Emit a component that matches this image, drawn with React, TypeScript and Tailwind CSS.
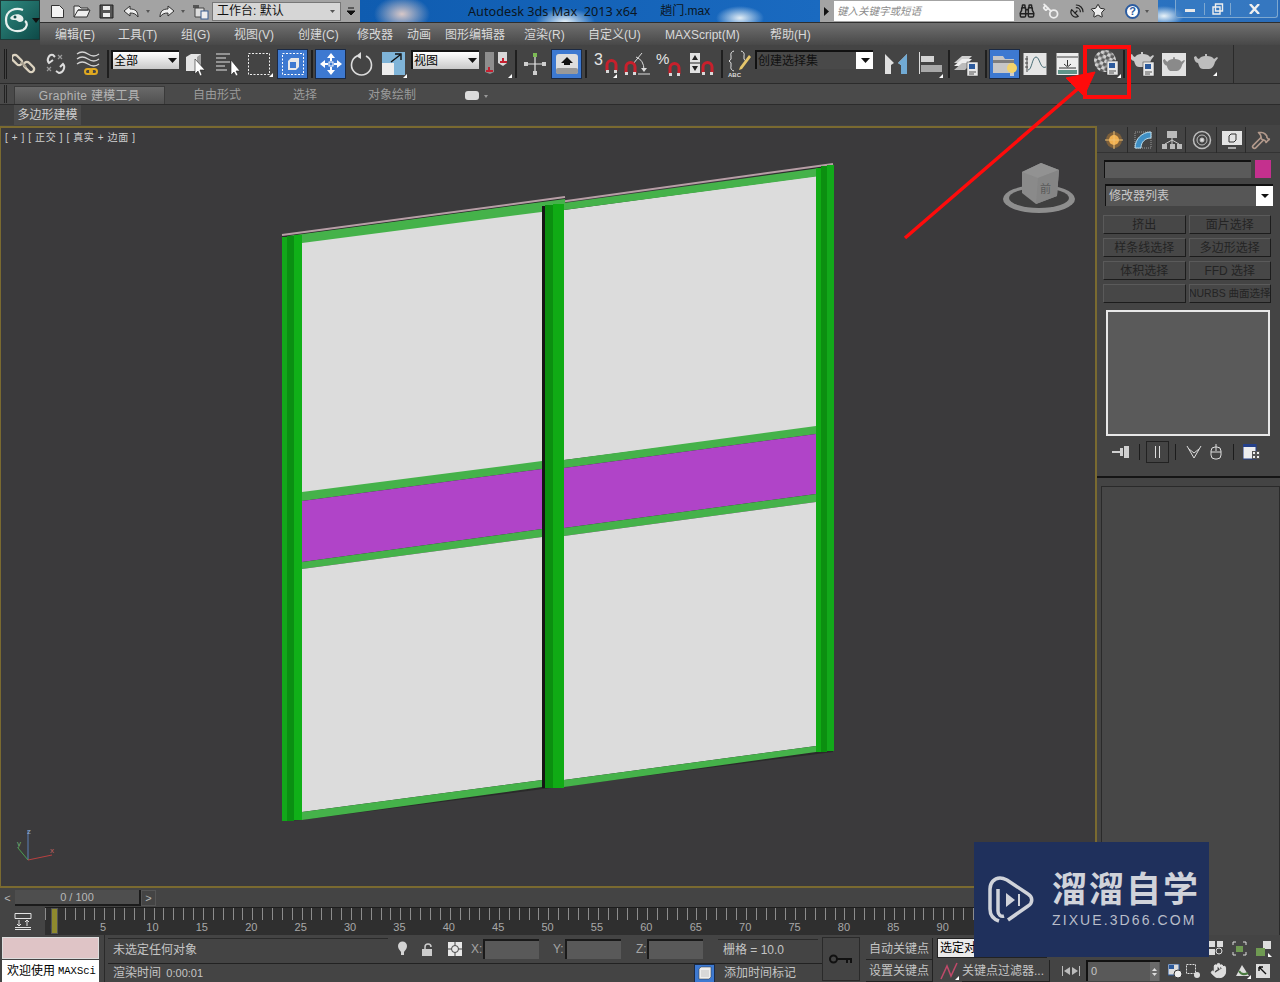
import {Binoculars, Hand, Hammer, Key, SatelliteDish, Star} from "lucide-react";

const Flyout = ({x, y}: {x: number; y: number}) => (
    <path d={`M${x} ${y}l4 -4v4z`} fill="#fff"/>
)

const Magnet = ({x, y}: {x: number; y: number}) => (
    <g>
        <path d={`M${x + 1} ${y + 11}v-6a4.5 4.5 0 0 1 9 0v6`} fill="none" stroke="#c8202c" strokeWidth="3"/>
        <path d={`M${x} ${y + 10}h3v3h-3zM${x + 8} ${y + 10}h3v3h-3z`} fill="#d8d8d8"/>
    </g>
)

const DocBadge = ({x, y}: {x: number; y: number}) => (
    <g>
        <rect x={x} y={y} width="11" height="14" fill="#e8e8e8" stroke="#333" strokeWidth=".5"/>
        <rect x={x + 2} y={y + 2} width="6" height="5" fill="#2c5a9c"/>
        <path d={`M${x + 2} ${y + 10}h7M${x + 2} ${y + 12}h5`} stroke="#555"/>
    </g>
)

const Teapot = ({x, y, fill = "#c9c9c9"}: {x: number; y: number; fill?: string}) => (
    <path
        transform={`translate(${x} ${y})`}
        fill={fill}
        d="M11 0h2v2c3 0 6 1 7 3l3-2 1 1-3 4c-1 4-3 7-6 7H9C6 15 5 12 4 9 2 9 0 6 0 3l2-1c1 2 2 3 3 3 1-2 4-3 6-3z"
    />
)

const Sep = ({ml}: {ml: string}) => <div className={`${ml} h-[28px] w-[2px] bg-[#1f1f1f] shrink-0`}/>

const Grip = () => (
    <div className="ml-[4px] flex gap-[1px] shrink-0">
        <div className="h-[30px] w-[1px] bg-[#1d1d1d]"/>
        <div className="h-[30px] w-[1px] bg-[#1d1d1d]"/>
    </div>
)

const MainToolbar = () => (
    <div className="flex h-[38px] w-[1234px] items-center border-r border-[#2a2a2a] text-black">
        <Grip/>
        <svg className="ml-[5px] shrink-0" width="24" height="24" viewBox="0 0 24 24" fill="none" stroke="#dcd3c0" strokeWidth="2.4">
            <rect x="-1" y="5" width="12" height="6" rx="3" transform="rotate(45 5 8)"/>
            <rect x="11" y="12" width="12" height="6" rx="3" transform="rotate(45 17 15)"/>
            <path d="M9 10l5 5" stroke="#a8a090"/>
        </svg>
        <svg className="ml-[8px] shrink-0" width="24" height="24" viewBox="0 0 24 24" fill="none" stroke="#dcdcdc" strokeWidth="2">
            <path d="M9 8 5 11C2 8 5 2 9 3l2 2"/>
            <path d="M16 15l3-3c3 3 0 9-4 9l-3-2"/>
            <path d="M14 3l4 4M18 3l-4 4M3 15l4 4M7 15l-4 4" stroke="#9a9a9a" strokeWidth="1.2"/>
        </svg>
        <svg className="ml-[8px] shrink-0" width="25" height="26" viewBox="0 0 25 26" fill="none" stroke="#d4d4d4" strokeWidth="1.3">
            <path d="M1 3q5-4 11 0t11 0M1 8q5-4 11 0t11 0M1 13q5-4 11 0t11 0"/>
            <rect x="9" y="18" width="7" height="5" rx="2.5" stroke="#e0a920" strokeWidth="2"/>
            <rect x="14" y="18" width="7" height="5" rx="2.5" stroke="#e0a920" strokeWidth="2"/>
        </svg>
        <Sep ml="ml-[6px]"/>
        <div className="ml-[2px] mt-[5px] flex h-[19px] w-[68px] shrink-0 items-center justify-between self-start border-t-2 border-l-2 border-[#151515] bg-[linear-gradient(#fff,#c9c9c9)] pl-[1px] pr-[2px] text-[12px] leading-none">
            全部
            <svg width="9" height="5" viewBox="0 0 9 5"><path d="M0 0h9L4.500 5z" fill="#111"/></svg>
        </div>
        <svg className="ml-[6px] shrink-0" width="22" height="26" viewBox="0 0 22 26">
            <path d="M1 6l5-3h10v14l-4 3H1z" fill="#e4e4e4"/>
            <path d="M12 6l4-3v14l-4 3z" fill="#9c9c9c"/>
            <path d="M10 8v15l3-3 2 5 2-1-2-5h5z" fill="#fff" stroke="#222" strokeWidth=".6"/>
        </svg>
        <svg className="ml-[8px] shrink-0" width="26" height="26" viewBox="0 0 26 26">
            <path d="M1 3h14M1 7h10M1 11h14M1 15h9M1 19h11" stroke="#e2e2e2"/>
            <path d="M16 9v15l3-3 2 4 2-1-2-4h4z" fill="#fff" stroke="#222" strokeWidth=".6"/>
        </svg>
        <svg className="ml-[6px] shrink-0" width="26" height="26" viewBox="0 0 26 26">
            <rect x="1.500" y="2.500" width="21" height="21" fill="none" stroke="#eee" strokeDasharray="2 1.500"/>
            <Flyout x={22} y={26}/>
        </svg>
        <div className="ml-[4px] flex h-[30px] w-[31px] shrink-0 items-center justify-center border border-[#1b2a44] bg-[#3d79d1]">
            <svg width="24" height="24" viewBox="0 0 24 24">
                <rect x="1.500" y="1.500" width="21" height="21" fill="none" stroke="#fff" strokeDasharray="2 1.500"/>
                <path d="M7 9l3-3h8v9l-3 3H7z" fill="#e8e8e8"/>
                <path d="M9 10h6v6H9z" fill="#3d79d1"/>
            </svg>
        </div>
        <Sep ml="ml-[3px]"/>
        <div className="ml-[2px] flex h-[30px] w-[31px] shrink-0 items-center justify-center border border-[#1b2a44] bg-[#3d79d1]">
            <svg width="24" height="24" viewBox="0 0 24 24" fill="#fff">
                <path d="M12 1l4 5h-3v3h-2V6H8zM12 23l-4-5h3v-3h2v3h3zM1 12l5-4v3h3v2H6v3zM23 12l-5 4v-3h-3v-2h3V8z"/>
                <rect x="10" y="10" width="4" height="4" fill="none" stroke="#fff"/>
            </svg>
        </div>
        <svg className="ml-[3px] shrink-0" width="25" height="26" viewBox="0 0 25 26" fill="none" stroke="#dcdcdc" strokeWidth="1.600">
            <path d="M8 5a10 10 0 1 0 9 0"/>
            <path d="M12 1l-5 4 5 3z" fill="#dcdcdc" stroke="none"/>
        </svg>
        <svg className="ml-[7px] shrink-0" width="26" height="28" viewBox="0 0 26 28">
            <rect x="1" y="2" width="23" height="23" fill="#7fb4d8"/>
            <rect x="1" y="13" width="12" height="12" fill="#ededed"/>
            <path d="M10 12l9-7M14 4h6v6" fill="none" stroke="#111" strokeWidth="1.400"/>
            <Flyout x={22} y={28}/>
        </svg>
        <div className="ml-[4px] mt-[5px] flex h-[19px] w-[68px] shrink-0 items-center justify-between self-start border-t-2 border-l-2 border-[#151515] bg-[linear-gradient(#fff,#c9c9c9)] pl-[1px] pr-[2px] text-[12px] leading-none">
            视图
            <svg width="9" height="5" viewBox="0 0 9 5"><path d="M0 0h9L4.500 5z" fill="#111"/></svg>
        </div>
        <svg className="ml-[5px] shrink-0" width="28" height="28" viewBox="0 0 28 28">
            <path d="M1 2h9v20l-4 2-5-2z" fill="#8e8e8e"/>
            <path d="M14 2h9v11l-4 3-5-3z" fill="#d8d8d8"/>
            <path d="M5 17v5M2 21h7M19 8v5M16 12h7" stroke="#c42030" strokeWidth="2"/>
            <Flyout x={24} y={28}/>
        </svg>
        <Sep ml="ml-[3px]"/>
        <svg className="ml-[6px] shrink-0" width="24" height="26" viewBox="0 0 24 26">
            <path d="M12 5v17M2 13h20" stroke="#e6e6e6" strokeWidth="1.200"/>
            <rect x="10" y="2" width="4" height="4" fill="#7dbb55"/>
            <path d="M1 11h4v4H1zM19 11h4v4h-4zM10 20h4v4h-4z" fill="#cfcfcf"/>
        </svg>
        <div className="ml-[4px] flex h-[30px] w-[31px] shrink-0 items-center justify-center border border-[#1b2a44] bg-[#3d79d1]">
            <svg width="24" height="22" viewBox="0 0 24 22">
                <rect x="1" y="1" width="22" height="20" rx="3" fill="#ddd"/>
                <rect x="1" y="15" width="22" height="6" rx="2" fill="#999"/>
                <path d="M12 4l6 6h-3v2H9v-2H6z" fill="#111"/>
            </svg>
        </div>
        <Sep ml="ml-[3px]"/>
        <svg className="ml-[6px] shrink-0" width="26" height="28" viewBox="0 0 26 28">
            <text x="1" y="15" fill="#e4e4e4" fontSize="16" fontFamily="Liberation Sans">3</text>
            <Magnet x={13} y={10}/>
            <Flyout x={20} y={28}/>
        </svg>
        <svg className="ml-[5px] shrink-0" width="26" height="26" viewBox="0 0 26 26">
            <path d="M9 13 L18 2M12 6q8 3 8 13M14 23h12" fill="none" stroke="#dcdcdc"/>
            <path d="M17 17h6l-3 4z" fill="#dcdcdc"/>
            <Magnet x={1} y={11}/>
        </svg>
        <svg className="ml-[6px] shrink-0" width="26" height="26" viewBox="0 0 26 26">
            <text x="0" y="13" fill="#e4e4e4" fontSize="15" fontFamily="Liberation Sans">%</text>
            <Magnet x={13} y={12}/>
        </svg>
        <svg className="ml-[7px] shrink-0" width="25" height="26" viewBox="0 0 25 26">
            <rect x="1" y="2" width="10" height="20" fill="#e2e2e2"/>
            <path d="M1 12h10" stroke="#222"/>
            <path d="M6 4l3 5H3zM6 20l3-5H3z" fill="#222"/>
            <Magnet x={13} y={11}/>
        </svg>
        <Sep ml="ml-[7px]"/>
        <svg className="ml-[4px] shrink-0" width="25" height="28" viewBox="0 0 25 28">
            <path d="M7 1Q3 2 4 6t-2 5q3 1 2 5t3 5M14 1q4 1 3 5t2 5" fill="none" stroke="#e0e0e0"/>
            <path d="M13 17l9-12 2 2-9 12-3 1z" fill="#e5c66c"/>
            <text x="1" y="27" fill="#ddd" fontSize="6" fontWeight="700" fontFamily="Liberation Sans">ABC</text>
        </svg>
        <div className="ml-[3px] mt-[5px] flex h-[19px] w-[118px] shrink-0 items-center justify-between self-start border-t-2 border-l-2 border-[#111] bg-[linear-gradient(90deg,#494949_0,#494949_85%,#fff_85%)] pl-[1px] pr-[3px] text-[12px] leading-none text-[#111]">
            创建选择集
            <svg width="9" height="5" viewBox="0 0 9 5"><path d="M0 0h9L4.500 5z" fill="#111"/></svg>
        </div>
        <svg className="ml-[11px] shrink-0" width="25" height="26" viewBox="0 0 25 26">
            <path d="M1 3l9 9-3 2v9H1zM23 3v20h-6v-9l-3-2z" fill="#e0e0e0"/>
            <path d="M23 3v20h-6v-9l-3-2z" fill="#71aad4"/>
        </svg>
        <svg className="ml-[9px] shrink-0" width="26" height="28" viewBox="0 0 26 28">
            <path d="M1.500 2v22" stroke="#ddd"/>
            <rect x="3" y="6" width="13" height="6" fill="#d4d4d4"/>
            <rect x="3" y="15" width="21" height="7" fill="#a8a8a8"/>
            <Flyout x={21} y={28}/>
        </svg>
        <Sep ml="ml-[4px]"/>
        <svg className="ml-[3px] shrink-0" width="26" height="26" viewBox="0 0 26 26">
            <path d="M1 12 9 5h10l-7 7z" fill="#cfcfcf"/>
            <path d="M1 15l8-7h10l-7 7z" fill="#eee"/>
            <path d="M1 19l8-7h10l-7 7z" fill="#bbb"/>
            <DocBadge x={14} y={11}/>
        </svg>
        <Sep ml="ml-[6px]"/>
        <div className="ml-[2px] flex h-[30px] w-[31px] shrink-0 items-center justify-center border border-[#1b2a44] bg-[#3d79d1]">
            <svg width="27" height="27" viewBox="0 0 27 27">
                <path d="M2 5h10l2 3h9v14H2z" fill="#c6c6c6"/>
                <path d="M2 9h21v3H2z" fill="#7d7d7d"/>
                <circle cx="21" cy="17" r="5" fill="#f2d36a"/>
                <path d="M19 22h4v3h-4z" fill="#ccc"/>
            </svg>
        </div>
        <svg className="ml-[3px] shrink-0" width="24" height="24" viewBox="0 0 24 24">
            <rect x=".5" y="1" width="23" height="22" fill="#e6e6e6"/>
            <path d="M4 4v16M2 7h3M2 11h3M2 15h3" stroke="#444"/>
            <path d="M5 18c4 0 4-13 8-13s4 13 10 10" fill="none" stroke="#4a6f78"/>
        </svg>
        <svg className="ml-[9px] shrink-0" width="23" height="24" viewBox="0 0 23 24">
            <rect x=".5" y="1" width="22" height="22" fill="#ededed"/>
            <path d="M1 5h21" stroke="#444"/>
            <path d="M11.500 8v6M8 12l3.500 3 3.500-3M3 16h17" stroke="#333" fill="none"/>
            <rect x="2" y="18" width="19" height="4" fill="#5f9489"/>
        </svg>
        <Sep ml="ml-[6px]"/>
        <svg className="ml-[7px] shrink-0" width="27" height="28" viewBox="0 0 27 28">
            <defs>
                <pattern id="check" width="7" height="7" patternUnits="userSpaceOnUse" patternTransform="rotate(25)">
                    <rect width="7" height="7" fill="#d0d0d0"/>
                    <rect width="3.500" height="3.500" fill="#5c5c5c"/>
                    <rect x="3.500" y="3.500" width="3.500" height="3.500" fill="#5c5c5c"/>
                </pattern>
            </defs>
            <circle cx="11" cy="11" r="11" fill="url(#check)"/>
            <DocBadge x={13} y={11}/>
            <Flyout x={23} y={28}/>
        </svg>
        <Sep ml="ml-[2px]"/>
        <svg className="ml-[5px] shrink-0" width="25" height="26" viewBox="0 0 25 26">
            <Teapot x={0} y={1}/>
            <DocBadge x={13} y={11}/>
        </svg>
        <div className="ml-[7px] flex h-[23px] w-[24px] shrink-0 items-center justify-center bg-[#e2e2e2]">
            <svg width="22" height="15" viewBox="0 0 24 16"><Teapot x={0} y={0} fill="#8a8a8a"/></svg>
        </div>
        <svg className="ml-[8px] shrink-0" width="26" height="24" viewBox="0 0 26 24">
            <Teapot x={0} y={2} fill="#bdbdbd"/>
            <Flyout x={19} y={24}/>
        </svg>
    </div>
)

const TitleBar = () => (
    <div className="flex h-[23px] border-b border-[#2e2e2e]">
        <div className="flex w-[320px] items-center bg-[#a3a3a3] pl-[10px] text-[#222]">
            <svg width="15" height="15" viewBox="0 0 15 15" className="shrink-0"><path d="M1.500 1.500h8l4 4v8h-12z" fill="#f4f4f4" stroke="#333"/></svg>
            <svg width="18" height="15" viewBox="0 0 18 15" className="ml-[8px] shrink-0"><path d="M1 13V2h5l2 2h7v2H5l-4 7h13l3-7H5" fill="#eee" stroke="#333"/></svg>
            <svg width="15" height="15" viewBox="0 0 15 15" className="ml-[8px] shrink-0"><path d="M1 1h13v13H1z" fill="#555" stroke="#222"/><path d="M4 2h7v4H4zM4 9h7v4H4z" fill="#eee"/></svg>
            <svg width="17" height="13" viewBox="0 0 17 13" className="ml-[9px] shrink-0"><path d="M7 1 1 6l6 5V8c4 0 6 1 8 4 0-6-3-8-8-8z" fill="#eee" stroke="#333"/></svg>
            <svg width="4" height="3" viewBox="0 0 4 3" className="ml-[6px] shrink-0"><path d="M0 0h4L2 3z" fill="#555"/></svg>
            <svg width="17" height="13" viewBox="0 0 17 13" className="ml-[8px] shrink-0"><path d="M10 1l6 5-6 5V8C6 8 4 9 2 12c0-6 3-8 8-8z" fill="#eee" stroke="#333"/></svg>
            <svg width="4" height="3" viewBox="0 0 4 3" className="ml-[6px] shrink-0"><path d="M0 0h4L2 3z" fill="#555"/></svg>
            <svg width="17" height="17" viewBox="0 0 17 17" className="ml-[7px] shrink-0"><path d="M1 2h6v3H1z" fill="#555"/><path d="M3 5h9v9H3z" fill="#ddd" stroke="#444"/><rect x="9" y="8" width="7" height="8" fill="#eee" stroke="#3a5f90"/></svg>
            <div className="ml-[3px] flex h-[19px] w-[129px] shrink-0 items-center justify-between border border-[#777] bg-[#d6d6d6] pl-[4px] pr-[5px] text-[12px] leading-none text-[#111]">
                工作台: 默认
                <svg width="5" height="3" viewBox="0 0 5 3"><path d="M0 0h5L2.500 3z" fill="#555"/></svg>
            </div>
            <svg width="8" height="8" viewBox="0 0 8 8" className="ml-[6px] shrink-0"><path d="M1 1h6M0 4h8l-4 4z" stroke="#111" fill="#111"/></svg>
        </div>
        <div className="flex w-[460px] items-center bg-[radial-gradient(ellipse_28px_18px_at_42px_14px,#d8c8c8,transparent),radial-gradient(ellipse_30px_14px_at_205px_22px,#e8f2f8,transparent),radial-gradient(ellipse_24px_12px_at_380px_18px,#e2edf5,transparent),linear-gradient(90deg,#0f5cb0,#1a6ac0)] pl-[108px] text-[#0b1622]">
            <span className="whitespace-pre font-['Noto_Sans'] text-[12.700px] leading-none">Autodesk 3ds Max  2013 x64</span>
            <span className="ml-[23px] text-[12px] leading-none">趟门.max</span>
        </div>
        <div className="flex w-[338px] items-center bg-[#a3a3a3] pl-[4px] text-[#222]">
            <svg width="5" height="9" viewBox="0 0 5 9" className="shrink-0"><path d="M0 0l5 4.500L0 9z" fill="#111"/></svg>
            <div className="ml-[5px] flex h-[20px] w-[180px] shrink-0 items-center bg-white pl-[3px] text-[10.500px] italic leading-none text-[#8c8c8c]">键入关键字或短语</div>
            <Binoculars size={16} className="ml-[5px] shrink-0" strokeWidth={2.200}/>
            <Key size={17} className="ml-[7px] shrink-0 -scale-x-100 text-[#eee]" strokeWidth={2.500}/>
            <SatelliteDish size={16} className="ml-[10px] shrink-0" strokeWidth={1.800}/>
            <Star size={16} className="ml-[5px] shrink-0 text-[#222]" fill="#eee" strokeWidth={1.500}/>
            <div className="ml-[19px] flex h-[15px] w-[15px] shrink-0 items-center justify-center rounded-full border-2 border-[#2c5ca0] bg-white text-[11px] font-bold leading-none text-[#2c5ca0]">?</div>
            <svg width="4" height="3" viewBox="0 0 4 3" className="ml-[5px] shrink-0"><path d="M0 0h4L2 3z" fill="#555"/></svg>
        </div>
        <div className="flex flex-1 items-start bg-[radial-gradient(ellipse_20px_10px_at_6px_16px,#e8f2f8,transparent),linear-gradient(90deg,#2a72c0,#2a6cb8)] pl-[17px]">
            <div className="flex h-[18px] w-[103px] items-center rounded-b-[3px] border border-t-0 border-[#7ea8d0] bg-[#3d7ec4]/60">
                <div className="flex w-[28px] justify-center"><div className="mt-[4px] h-[3px] w-[10px] bg-[#e8e8e8]"/></div>
                <div className="flex w-[27px] justify-center border-x border-[#7ea8d0]">
                    <svg width="12" height="12" viewBox="0 0 12 12"><path d="M3.500 1h7v7h-7zM1 4h7v7H1z" fill="none" stroke="#eee" strokeWidth="1.400"/></svg>
                </div>
                <div className="flex flex-1 justify-center">
                    <svg width="11" height="10" viewBox="0 0 11 10"><path d="M1 0l9 10M10 0 1 10" stroke="#eee" strokeWidth="2.400"/></svg>
                </div>
            </div>
        </div>
    </div>
)

const MenuBar = () => (
    <div className="flex h-[22px] items-center bg-[linear-gradient(#707070,#484848)] pl-[15px] pt-[1px] text-[12px] leading-none text-[#d9d9d9]">
        <span className="w-[63px] shrink-0">编辑(E)</span>
        <span className="w-[63px] shrink-0">工具(T)</span>
        <span className="w-[53px] shrink-0">组(G)</span>
        <span className="w-[64px] shrink-0">视图(V)</span>
        <span className="w-[59px] shrink-0">创建(C)</span>
        <span className="w-[50px] shrink-0">修改器</span>
        <span className="w-[38px] shrink-0">动画</span>
        <span className="w-[79px] shrink-0">图形编辑器</span>
        <span className="w-[64px] shrink-0">渲染(R)</span>
        <span className="w-[77px] shrink-0">自定义(U)</span>
        <span className="w-[105px] shrink-0">MAXScript(M)</span>
        <span className="shrink-0">帮助(H)</span>
    </div>
)

const Ribbon = () => (
    <>
        <div className="flex h-[22px] items-end border-y border-[#2b2b2b] bg-[#4a4a4a] text-[12px] leading-none text-[#9b9b9b]">
            <div className="mb-[1px] ml-[4px] flex gap-[1px]"><div className="h-[18px] w-[1px] bg-[#222]"/><div className="h-[18px] w-[1px] bg-[#222]"/></div>
            <div className="ml-[7px] flex h-[18px] w-[151px] items-center justify-center border border-b-0 border-[#3a3a3a] bg-[linear-gradient(#6a6a6a,#505050)] tracking-[.3px] text-[#b4b4b4]">Graphite 建模工具</div>
            <span className="mb-[3px] ml-[28px] w-[100px]">自由形式</span>
            <span className="mb-[3px] w-[75px]">选择</span>
            <span className="mb-[3px] w-[97px]">对象绘制</span>
            <div className="mb-[4px] h-[9px] w-[14px] rounded-[3px] bg-[#dcdcdc]"/>
            <svg width="4" height="3" viewBox="0 0 4 3" className="mb-[6px] ml-[5px]"><path d="M0 0h4L2 3z" fill="#999"/></svg>
        </div>
        <div className="flex h-[20px] items-stretch bg-[#3e3e3e] pl-[14px] text-[12px] leading-none text-[#cfcfcf]">
            <div className="flex w-[67px] items-center justify-center bg-[#4b4b4b]">多边形建模</div>
        </div>
    </>
)

const Viewport = () => (
    <div className="relative h-[762px] overflow-hidden border-y-2 border-l border-r-2 border-[#7a6a30] bg-[#3b3a3c]">
        <div className="whitespace-pre pl-[4px] pt-[3px] text-[10px] leading-[14px] tracking-[.6px] text-[#cfcfcf]">[ + ] [ 正交 ] [ 真实 + 边面 ]</div>
        <svg className="absolute left-[-1px] top-[-1px]" width="1095" height="760" viewBox="0 127 1095 760">
            <path d="M282 236 565 198V205L833 165V752L301 820 282 821z" fill="#2a2a2a"/>
            <path d="M282 235 565 197" stroke="#b79ea6" strokeWidth="2"/>
            <path d="M545 204 833 164" stroke="#b79ea6" strokeWidth="2"/>

            <path d="M302 242 542 209V462L302 493z" fill="#dcdcdc"/>
            <path d="M302 492 542 461V469L302 501z" fill="#45b24a"/>
            <path d="M302 501 542 469V529L302 562z" fill="#b044c8"/>
            <path d="M302 562 542 529V537L302 569z" fill="#45b24a"/>
            <path d="M302 569 542 537V780L302 812z" fill="#dcdcdc"/>
            <path d="M302 812 542 780V787L302 820z" fill="#45b24a"/>
            <path d="M288 236 565 199V209L302 243z" fill="#45b24a"/>

            <path d="M564 210 816 176V428L564 460z" fill="#dcdcdc"/>
            <path d="M564 460 816 426V434L564 468z" fill="#45b24a"/>
            <path d="M564 468 816 434V494L564 528z" fill="#b044c8"/>
            <path d="M564 528 816 494V502L564 536z" fill="#45b24a"/>
            <path d="M564 536 816 502V746L564 780z" fill="#dcdcdc"/>
            <path d="M564 780 816 746V752L564 787z" fill="#45b24a"/>
            <path d="M564 203 820 168V176L564 210z" fill="#45b24a"/>

            <path d="M282 237h5v584h-5z" fill="#12a81a"/>
            <path d="M287 236h7v585h-7z" fill="#0a8f12"/>
            <path d="M294 235h8v585h-8z" fill="#10b018"/>
            <path d="M542 206h3v582h-3z" fill="#151515"/>
            <path d="M545 205h8v583h-8z" fill="#0b8f10"/>
            <path d="M553 204h11v584h-11z" fill="#10ab15"/>
            <path d="M816 168h5v584h-5z" fill="#10ab15"/>
            <path d="M821 166h6v586h-6z" fill="#0b8f10"/>
            <path d="M827 165h7v586h-7z" fill="#12a81a"/>

            <ellipse cx="1039" cy="199" rx="36" ry="14" fill="#8e8e8e"/>
            <ellipse cx="1039" cy="198" rx="30" ry="10" fill="#3f3f3f"/>
            <path d="M1022 172 1041 163 1059 170 1057 196 1036 204 1022 193z" fill="#8a8a8a"/>
            <path d="M1022 172 1041 163 1059 170 1038 178z" fill="#929292"/>
            <path d="M1038 178 1059 170 1057 196 1036 204z" fill="#858585"/>
            <text x="1040" y="193" fill="#5a5a5a" fontSize="11" fontFamily="Noto Sans CJK SC">前</text>

            <path d="M28 860V830" stroke="#5a7fb8"/>
            <path d="M28 860 18 848" stroke="#4aa050"/>
            <path d="M28 860 52 855" stroke="#b84040"/>
            <text x="27" y="834" fill="#8ea8d0" fontSize="8">z</text>
            <text x="17" y="846" fill="#6cb070" fontSize="8">y</text>
            <text x="50" y="853" fill="#c06060" fontSize="8">x</text>
        </svg>
    </div>
)

const TimeSlider = () => (
    <div className="flex h-[19px] items-center bg-[#444] pt-[1px] text-[11px] leading-none text-[#b8b8b8]">
        <div className="flex h-[16px] w-[15px] items-center justify-center">&lt;</div>
        <div className="flex h-[16px] w-[126px] items-center justify-center border-b-2 border-r-2 border-[#1b1b1b] bg-[#4e4e4e]">0 / 100</div>
        <div className="flex h-[16px] w-[15px] items-center justify-center border border-[#555]">&gt;</div>
    </div>
)

const Ruler = () => (
    <div className="flex h-[28px] bg-[#444]">
        <div className="flex w-[45px] shrink-0 justify-center pt-[5px]">
            <svg width="18" height="18" viewBox="0 0 18 18" fill="none" stroke="#e2e2e2">
                <path d="M1 1.500h16v5H1zM1 15.500h16M1 17.500h16M5 8v6M3 12l2 2 2-2M13 8v6M11 10l2-2 2 2"/>
            </svg>
        </div>
        <div className="relative flex-1 border-t border-[#1e1e1e] bg-[#2f2f2f]">
            <div className="h-[12px] bg-[repeating-linear-gradient(90deg,#8c8c8c_0,#8c8c8c_1px,transparent_1px,transparent_9.870px)]"/>
            <div className="ml-[-16px] flex text-[11px] leading-[14px] text-[#a8a8a8]">
                {["0", "5", "10", "15", "20", "25", "30", "35", "40", "45", "50", "55", "60", "65", "70", "75", "80", "85", "90", "95"].map(n => (
                    <span key={n} className="w-[49.400px] shrink-0 text-center">{n}</span>
                ))}
            </div>
            <div className="absolute left-[6px] top-0 h-[26px] w-[7px] border border-[#555] bg-[#8f8a2e]"/>
        </div>
    </div>
)

const panelButtons = ["挤出", "面片选择", "样条线选择", "多边形选择", "体积选择", "FFD 选择", "", "NURBS 曲面选择"]

const CommandPanel = () => (
    <div className="flex w-[183px] shrink-0 flex-col bg-[#444] text-[#c8c8c8]">
        <div className="flex h-[27px] items-center gap-[1px] border-b border-[#333] pl-[3px] pt-[1px]">
            <div className="flex h-[26px] w-[28px] items-center justify-center border-r border-[#2a2a2a]">
                <svg width="18" height="18" viewBox="0 0 18 18">
                    <circle cx="9" cy="9" r="8" fill="#b87b30" opacity=".5"/>
                    <circle cx="9" cy="9" r="5" fill="#f0b050"/>
                    <path d="M9 0v18M0 9h18" stroke="#f0c070"/>
                </svg>
            </div>
            <div className="flex h-[26px] w-[28px] items-center justify-center border-r border-[#2a2a2a]">
                <svg width="20" height="20" viewBox="0 0 20 20" fill="none">
                    <path d="M2 2h16v16H2z" stroke="#999" strokeDasharray="1 1"/>
                    <path d="M2 18C2 9 9 2 18 2v6C12 8 8 12 8 18z" fill="#3f8fc4" stroke="#bfe0f0"/>
                </svg>
            </div>
            <div className="flex h-[26px] w-[28px] items-center justify-center border-r border-[#2a2a2a]">
                <svg width="20" height="20" viewBox="0 0 20 20" fill="#bbb">
                    <path d="M5 1h10v7H5zM0 14h5v5H0zM8 14h5v5H8zM15 14h5v5h-5z"/>
                    <path d="M10 8v6M3 14l7-4 7 4" stroke="#ccc" fill="none"/>
                </svg>
            </div>
            <div className="flex h-[26px] w-[30px] items-center justify-center border-r border-[#2a2a2a]">
                <svg width="20" height="20" viewBox="0 0 20 20" fill="none" stroke="#bdbdbd">
                    <circle cx="10" cy="10" r="8.500" strokeWidth="1.500"/>
                    <circle cx="10" cy="10" r="5"/>
                    <circle cx="10" cy="10" r="2" fill="#ddd"/>
                </svg>
            </div>
            <div className="flex h-[26px] w-[28px] items-center justify-center border-r border-[#2a2a2a]">
                <svg width="22" height="20" viewBox="0 0 22 20">
                    <rect x="1" y="1" width="20" height="14" fill="#e4e4e4"/>
                    <path d="M8 6l2-2h5v6l-2 2H8z" fill="none" stroke="#333"/>
                    <path d="M7 17h8v2H7z" fill="#aaa"/>
                </svg>
            </div>
            <div className="flex h-[26px] w-[28px] items-center justify-center">
                <Hammer size={20} className="text-[#b39a8c]"/>
            </div>
        </div>
        <div className="mt-[7px] flex items-center pl-[7px]">
            <div className="h-[18px] w-[147px] border-l border-t-2 border-[#111] bg-[#5a5a5a]"/>
            <div className="ml-[4px] h-[18px] w-[16px] bg-[#c4308e]"/>
        </div>
        <div className="ml-[8px] mt-[6px] flex h-[22px] w-[168px] items-center justify-between border-l border-t-2 border-[#111] bg-[#565656] pl-[3px] text-[12px] leading-none">
            修改器列表
            <div className="flex h-full w-[17px] items-center justify-center bg-white">
                <svg width="8" height="4" viewBox="0 0 8 4"><path d="M0 0h8L4 4z" fill="#111"/></svg>
            </div>
        </div>
        <div className="ml-[6px] mt-[9px] grid w-[168px] grid-cols-2 gap-x-[3px] gap-y-[4px]">
            {panelButtons.map((label, i) => (
                <div key={i} className={`flex h-[19px] items-center justify-center overflow-hidden whitespace-nowrap border border-t-[#5a5a5a] border-l-[#5a5a5a] border-b-[#1c1c1c] border-r-[#1c1c1c] bg-[#474747] leading-none text-[#242424] ${label.startsWith("NURBS") ? "text-[10.500px]" : "text-[12px]"}`}>{label}</div>
            ))}
        </div>
        <div className="ml-[9px] mt-[7px] h-[126px] w-[164px] border-2 border-[#e8e8e8] bg-[#5a5a5a]"/>
        <div className="ml-[9px] mt-[3px] flex h-[25px] w-[164px] items-center text-[#d0d0d0]">
            <svg width="18" height="14" viewBox="0 0 18 14" className="ml-[6px] shrink-0" fill="#d0d0d0"><path d="M0 6h8v2H0zM8 3h3v8H8zM12 1h5v12h-5z"/></svg>
            <div className="ml-[9px] h-[16px] w-[1px] bg-[#1c1c1c]"/>
            <div className="ml-[6px] flex h-[22px] w-[23px] items-center justify-center gap-[3px] border border-[#222]"><div className="h-[12px] w-[1px] bg-[#ddd]"/><div className="h-[12px] w-[1px] bg-[#ddd]"/></div>
            <div className="ml-[6px] h-[16px] w-[1px] bg-[#1c1c1c]"/>
            <svg width="16" height="14" viewBox="0 0 16 14" className="ml-[10px] shrink-0" fill="none" stroke="#ddd"><path d="M1 1l7 12 7-12M3 4l5 4 5-4"/></svg>
            <svg width="12" height="16" viewBox="0 0 12 16" className="ml-[8px] shrink-0" fill="none" stroke="#ddd"><rect x="1" y="3" width="10" height="12" rx="4"/><path d="M1 8h10M6 0v7"/></svg>
            <div className="ml-[11px] h-[16px] w-[1px] bg-[#1c1c1c]"/>
            <svg width="17" height="16" viewBox="0 0 17 16" className="ml-[9px] shrink-0"><rect width="13" height="15" fill="#eee" stroke="#24408a"/><path d="M0 0h13v3H0z" fill="#24408a"/><path d="M9 7h8v8H9z" fill="#555"/><path d="M10 8h2v2h-2zM14 8h2v2h-2zM10 12h2v2h-2zM14 12h2v2h-2z" fill="#eee"/></svg>
        </div>
        <div className="mt-[12px] h-[2px] bg-[#151515]"/>
        <div className="ml-[4px] mt-[8px] flex-1 border border-b-0 border-[#2a2a2a] bg-[#474747]"/>
    </div>
)

const StatusBar = () => (
    <div className="flex h-[47px] bg-[#444] text-[12px] leading-none text-[#c4c4c4]">
        <div className="flex w-[100px] shrink-0 flex-col pl-[2px] pt-[2px]">
            <div className="h-[22px] w-[97px] border border-[#ddd] bg-[#dfc4c6]"/>
            <div className="mt-[1px] flex h-[22px] w-[97px] items-center bg-white pl-[5px] text-black">欢迎使用 <span className="ml-[3px] font-['Liberation_Mono'] text-[10.500px]">MAXSci</span></div>
        </div>
        <div className="ml-[4px] h-full w-[1px] bg-[#2a2a2a]"/>
        <div className="ml-[3px] flex w-[714px] shrink-0 flex-col">
            <div className="flex h-[28px] items-center">
                <div className="flex h-[22px] w-[280px] shrink-0 items-center border-t border-[#2a2a2a] pl-[5px]">未选定任何对象</div>
                <svg width="11" height="16" viewBox="0 0 11 16" className="ml-[9px] shrink-0"><path d="M1 5a4.500 4.500 0 0 1 9 0c0 3-2 4-3 6v3H4v-3C3 9 1 8 1 5z" fill="#d4d4d4"/></svg>
                <svg width="11" height="13" viewBox="0 0 11 13" className="ml-[14px] shrink-0"><path d="M3 6V4a3 3 0 0 1 6 0" fill="none" stroke="#ccc" strokeWidth="1.500"/><rect y="6" width="10" height="7" fill="#ccc"/></svg>
                <svg width="14" height="14" viewBox="0 0 14 14" className="ml-[15px] shrink-0"><rect width="14" height="14" fill="#e8e8e8"/><circle cx="7" cy="7" r="3.500" fill="none" stroke="#444"/><path d="M7 0v14M0 7h14" stroke="#444" strokeDasharray="3 8"/></svg>
                <span className="ml-[9px] w-[12px] text-[#a4a4a4]">X:</span>
                <div className="h-[20px] w-[56px] shrink-0 border-l-2 border-t-2 border-[#1a1a1a] bg-[#595959]"/>
                <span className="ml-[14px] w-[12px] text-[#a4a4a4]">Y:</span>
                <div className="h-[20px] w-[56px] shrink-0 border-l-2 border-t-2 border-[#1a1a1a] bg-[#595959]"/>
                <span className="ml-[15px] w-[11px] text-[#a4a4a4]">Z:</span>
                <div className="h-[20px] w-[56px] shrink-0 border-l-2 border-t-2 border-[#1a1a1a] bg-[#595959]"/>
                <div className="ml-[15px] flex h-[21px] w-[100px] shrink-0 items-center border-t border-[#2a2a2a] pl-[5px]">栅格 = 10.0</div>
            </div>
            <div className="flex h-[19px] items-center border-t border-[#222]">
                <div className="w-[586px] shrink-0 pl-[5px]">渲染时间 <span className="ml-[2px] text-[11px]">0:00:01</span></div>
                <div className="flex h-[19px] w-[21px] shrink-0 items-center justify-center border border-[#1b2a44] bg-[#3d79d1]">
                    <svg width="14" height="14" viewBox="0 0 14 14"><path d="M1 3l2-2h10v10l-2 2H1z" fill="#eee" stroke="#333" strokeWidth=".5"/><path d="M3 4h8v7H3z" fill="#d8d8d8"/></svg>
                </div>
                <div className="ml-[4px] flex h-[19px] w-[100px] shrink-0 items-center whitespace-nowrap pl-[5px]">添加时间标记</div>
            </div>
        </div>
        <div className="mt-[2px] flex h-[44px] w-[38px] shrink-0 items-center justify-center border border-[#2a2a2a]">
            <svg width="24" height="10" viewBox="0 0 24 10" fill="none" stroke="#111" strokeWidth="2"><circle cx="4.500" cy="5" r="3.500"/><path d="M8 5h15M18 5v4M22 5v4"/></svg>
        </div>
        <div className="ml-[6px] flex w-[67px] shrink-0 flex-col pt-[3px]">
            <div className="flex h-[22px] items-center justify-center border-b border-r border-[#222]">自动关键点</div>
            <div className="flex h-[22px] items-center justify-center border-b border-r border-[#222]">设置关键点</div>
        </div>
        <div className="ml-[4px] flex w-[125px] shrink-0 flex-col pt-[3px]">
            <div className="flex h-[20px] w-[110px] items-center border border-[#222] bg-[#eaeaea] pl-[2px] text-black">选定对象</div>
            <div className="mt-[2px] flex h-[22px] items-center">
                <svg width="20" height="20" viewBox="0 0 20 20" fill="none" className="ml-[3px] shrink-0"><path d="M1 18 7 5l4 10 6-13" stroke="#c04a6a" strokeWidth="1.500"/><path d="M15 19l4-4v4z" fill="#fff"/></svg>
                <div className="ml-[2px] flex h-[22px] w-[88px] shrink-0 items-center whitespace-nowrap border-b border-r border-[#222]">关键点过滤器...</div>
            </div>
        </div>
        <div className="flex flex-1 flex-col pt-[3px]">
            <div className="flex h-[21px] items-center justify-end gap-[8px] pr-[8px]">
                <svg width="15" height="15" viewBox="0 0 15 15" fill="#ddd"><path d="M0 0h6v6H0zM8 0h6v6H8zM0 8h6v6H0z"/><circle cx="10" cy="10" r="3" fill="none" stroke="#ddd"/></svg>
                <svg width="15" height="15" viewBox="0 0 15 15" fill="none" stroke="#ddd"><path d="M1 4V1h3M11 1h3v3M1 11v3h3M11 14h3v-3"/><rect x="4" y="5" width="7" height="6" fill="#6f9a52" stroke="none"/></svg>
                <svg width="17" height="16" viewBox="0 0 17 16"><path d="M8 0h8v8H8z" fill="#ddd"/><path d="M1 7h9v8H1z" fill="#6f9a52"/><path d="M13 12l4 4h-4z" fill="#fff"/></svg>
            </div>
            <div className="flex h-[23px] items-center">
                <svg width="18" height="10" viewBox="0 0 18 10" fill="#bbb" className="shrink-0"><path d="M0 0h1v10H0zM8 1v8L2 5zM10 1v8l6-4zM17 0h1v10h-1z"/></svg>
                <div className="ml-[6px] flex h-[21px] w-[74px] shrink-0 items-center justify-between border-l-2 border-t-2 border-[#111] bg-[#595959] pl-[3px] pr-[1px] text-[11px]">
                    0
                    <div className="flex h-full w-[9px] flex-col items-center justify-center gap-[2px] bg-[#6a6a6a]">
                        <svg width="5" height="3" viewBox="0 0 5 3"><path d="M0 3h5L2.500 0z" fill="#ddd"/></svg>
                        <svg width="5" height="3" viewBox="0 0 5 3"><path d="M0 0h5L2.500 3z" fill="#ddd"/></svg>
                    </div>
                </div>
                <svg width="14" height="14" viewBox="0 0 14 14" className="ml-[8px] shrink-0"><rect width="11" height="11" fill="#dcdcdc" stroke="#2c5a9c"/><path d="M1 1h5v4H1z" fill="#2c5a9c"/><circle cx="10" cy="10" r="4" fill="#eee" stroke="#333"/></svg>
                <svg width="14" height="14" viewBox="0 0 14 14" className="ml-[4px] shrink-0"><rect x=".5" y=".5" width="9" height="9" fill="none" stroke="#ddd" strokeDasharray="2 1"/><circle cx="11" cy="11" r="3" fill="#ddd"/></svg>
                <Hand size={17} className="ml-[10px] shrink-0 text-[#eee]" fill="#ddd" strokeWidth={1.200}/>
                <svg width="17" height="17" viewBox="0 0 17 17" className="ml-[7px] shrink-0"><path d="M2 14 8 3l7 11z" fill="#ddd"/><path d="M5 9q3 5 9 2" fill="none" stroke="#4a7a40" strokeWidth="2"/><path d="M13 17l4-4v4z" fill="#fff"/></svg>
                <svg width="14" height="14" viewBox="0 0 14 14" className="ml-[5px] shrink-0"><rect width="14" height="14" fill="#dcdcdc"/><path d="M3 3l7 7M3 3h4M3 3v4" stroke="#111" strokeWidth="1.400"/></svg>
            </div>
        </div>
    </div>
)

function App() {
    return (
        <div className="relative h-[982px] w-[1280px] overflow-hidden bg-[#444] font-['Liberation_Sans','Noto_Sans_CJK_SC',sans-serif]">
            <div className="flex">
                <div className="flex h-[45px] w-[40px] shrink-0 items-start bg-[#444]">
                    <div className="relative flex h-[40px] w-[40px] items-center justify-start border border-[#1d3a38] bg-[linear-gradient(135deg,#2f8a80,#0e4a48)] pl-[3px]">
                        <svg width="26" height="26" viewBox="0 0 26 26" fill="none" className="shrink-0">
                            <path d="M19 3C12 0 2 3 2 13s10 13 17 10c4-2 5-7 2-9" stroke="#e8f0ee" strokeWidth="2.200"/>
                            <path d="M6 11c2-4 9-5 12-2s1 6-2 6c-2 0-3-2-5-2s-4 0-5-2z" fill="#e8f0ee"/>
                            <circle cx="11" cy="10" r="1.500" fill="#14504c"/>
                        </svg>
                        <svg width="8" height="5" viewBox="0 0 8 5" className="ml-[2px] shrink-0"><path d="M0 0h8L4 5z" fill="#111"/></svg>
                    </div>
                </div>
                <div className="min-w-0 flex-1">
                    <TitleBar/>
                    <MenuBar/>
                </div>
            </div>
            <MainToolbar/>
            <Ribbon/>
            <div className="mt-[1px] flex">
                <div className="w-[1097px] shrink-0">
                    <Viewport/>
                    <TimeSlider/>
                    <Ruler/>
                </div>
                <CommandPanel/>
            </div>
            <StatusBar/>

            {/* annotation drawn over the toolbar */}
            <svg className="absolute left-0 top-0" width="1280" height="300" viewBox="0 0 1280 300" fill="none" stroke="#ff0b0b">
                <rect x="1085" y="47" width="44" height="50" strokeWidth="4"/>
                <path d="M905 238 1088 80" strokeWidth="3.500"/>
                <path d="M1095 72 1066 78 1084 96z" fill="#ff0b0b" strokeWidth="1"/>
            </svg>

            <div className="absolute left-[974px] top-[842px] flex h-[115px] w-[235px] items-center bg-[#1f305c] pl-[13px] text-[#d0d3da]">
                <svg width="48" height="50" viewBox="0 0 48 50" fill="none" stroke="#d0d3da" strokeWidth="3.500" className="shrink-0">
                    <path d="M12 46C6 44 3 40 3 34V14C3 8 7 3 13 3c3 0 5 1 7 2l21 14c5 3 5 9 0 12L21 45"/>
                    <path d="M11 14V36c0 4 3 6 6 5"/>
                    <path d="M19 18l9 7-9 7z" fill="#d0d3da" stroke="none"/>
                    <path d="M32 19v12" strokeWidth="2"/>
                </svg>
                <div className="ml-[17px] flex flex-col">
                    <span className="whitespace-nowrap text-[35px] font-bold leading-[38px] tracking-[2px]">溜溜自学</span>
                    <span className="mt-[3px] whitespace-nowrap font-['Liberation_Sans'] text-[14px] leading-[16px] tracking-[2.100px] text-[#b8bdc9]">ZIXUE.3D66.COM</span>
                </div>
            </div>
        </div>
    );
}

export default App;
